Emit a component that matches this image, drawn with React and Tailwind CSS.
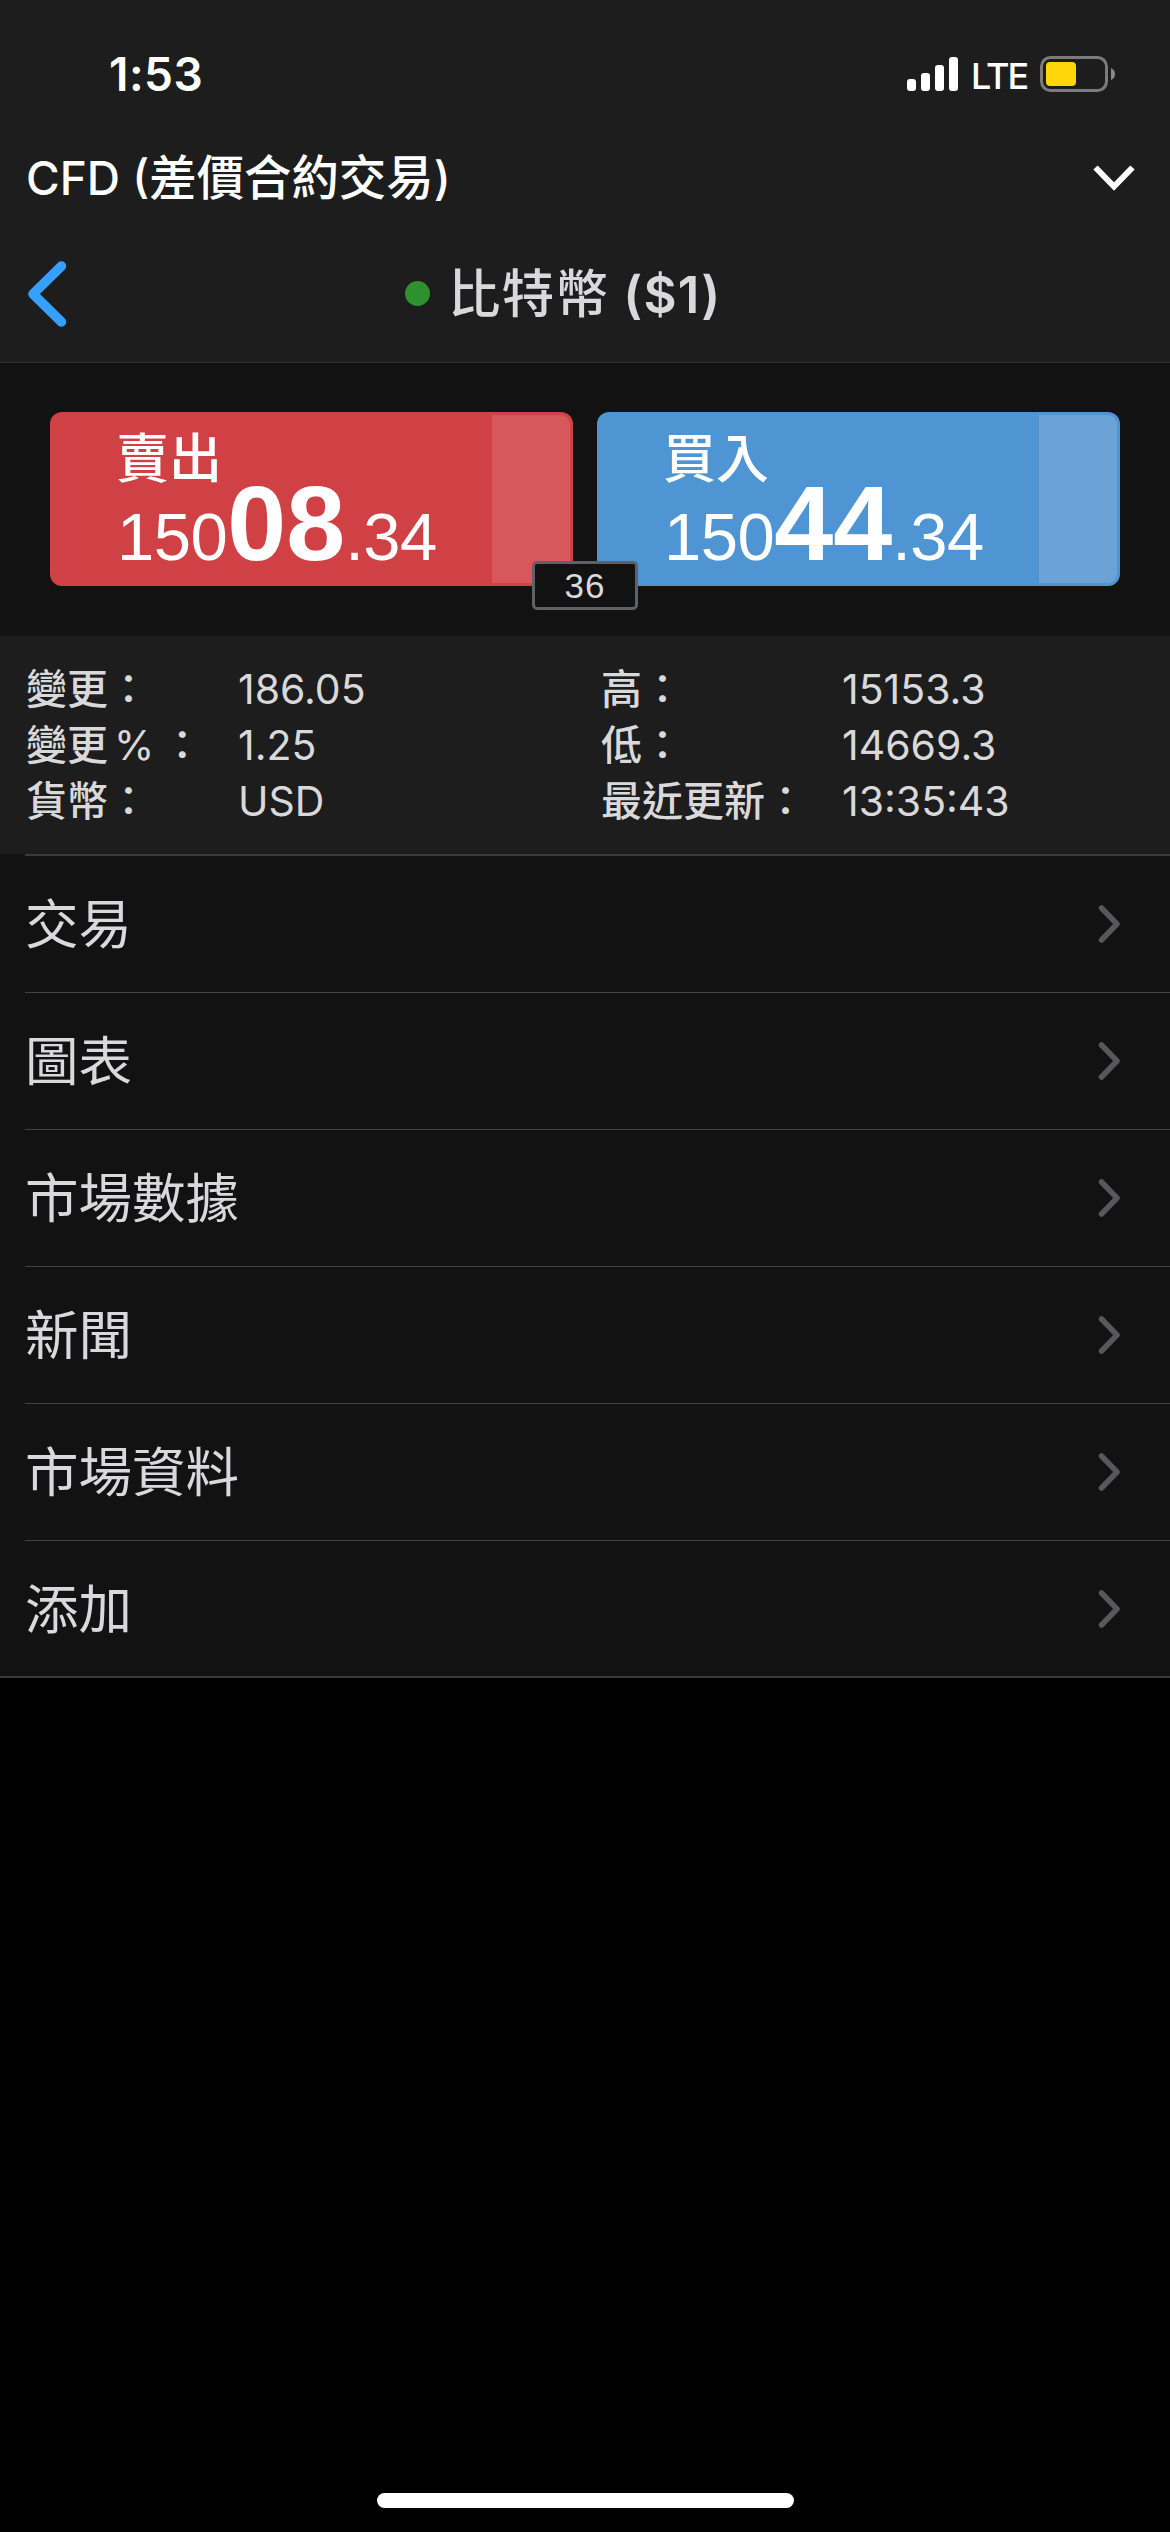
import React from "react";

const menu = ["交易", "圖表", "市場數據", "新聞", "市場資料", "添加"];

function StatusBar() {
  return (
    <div className="flex h-[148px] items-center justify-between pr-[55px] pl-[109px]">
      <span className="text-[46px] leading-none font-semibold tracking-[0.5px] text-white">1:53</span>
      <div className="flex items-center">
        <div className="flex h-[34px] items-end gap-[5px]">
          <i className="h-[12px] w-[9px] rounded-[3px] bg-white" />
          <i className="h-[18px] w-[9px] rounded-[3px] bg-white" />
          <i className="h-[26px] w-[9px] rounded-[3px] bg-white" />
          <i className="h-[34px] w-[9px] rounded-[3px] bg-white" />
        </div>
        <span className="ml-[13px] w-[69px] pt-[3px] text-[36px] leading-none font-medium tracking-[-2px] text-white">LTE</span>
        <svg width="75" height="36" viewBox="0 0 75 36" fill="none">
          <rect x="1.5" y="1.5" width="65" height="33" rx="9" stroke="#7b7b7b" strokeWidth="3" />
          <rect x="6" y="6" width="30" height="24" rx="4" fill="#ffd60a" />
          <path d="M71 12 Q75 14 75 18 Q75 22 71 24 Z" fill="#8a8a8a" />
        </svg>
      </div>
    </div>
  );
}

function PriceButton({ label, big, className, stripClass }) {
  return (
    <button className={"relative flex h-[174px] w-[523px] flex-col items-start rounded-[12px] pt-[21px] text-left text-white " + className}>
      <span className="ml-[66px] h-[52px] text-[53px] leading-[52px] font-medium">{label}</span>
      <span className="-mt-[15px] ml-[67px] flex items-baseline font-['Liberation_Sans',sans-serif] text-[67px] leading-none">
        <span className="tracking-[-0.5px]">150</span>
        <span className="text-[106px] font-bold">{big}</span>
        <span className="tracking-[-0.5px]">.34</span>
      </span>
      <span className={"absolute top-[3px] right-[3px] h-[168px] w-[78px] rounded-r-[9px] " + stripClass} />
    </button>
  );
}

function Info({ rows, className, labelClass }) {
  return (
    <dl className={className}>
      {rows.map(([label, value]) => (
        <div key={value} className="flex h-[56px] items-center">
          <dt className={"shrink-0 font-medium whitespace-pre " + labelClass}>
            {label}：
          </dt>
          <dd>{value}</dd>
        </div>
      ))}
    </dl>
  );
}

export default function App() {
  return (
    <div className="flex h-[2532px] w-[1170px] flex-col overflow-hidden bg-black font-['Inter','Noto_Sans_CJK_TC',sans-serif] text-[#d9d9db]">
      <header className="h-[363px] border-b border-[#333333] bg-[#1d1d1d]">
        <StatusBar />
        <div className="flex h-[60px] items-center justify-between pr-[35px] pl-[26px] text-white">
          <span className="text-[46px] leading-none font-medium whitespace-pre">
            CFD (<span className="text-[47.4px]">差價合約交易</span>)
          </span>
          <svg width="42" height="26" viewBox="0 0 42 26" fill="none" stroke="#fff" strokeWidth="6">
            <path d="M2.5 2.5 L21 21.5 L39.5 2.5" />
          </svg>
        </div>
        <div className="grid grid-cols-[377px_1fr] items-center pt-[17px] pl-[28px]">
          <svg width="39" height="66" viewBox="0 0 39 66" fill="none" stroke="#36a0fe" strokeWidth="9.5" strokeLinecap="round" strokeLinejoin="round">
            <path d="M33.5 5 L5 33 L33.5 61" />
          </svg>
          <div className="flex h-[137px] items-center">
            <i className="size-[25px] rounded-full bg-[#2f9030]" />
            <h1 className="ml-[18px] pt-[2px] text-[51px] leading-none font-semibold tracking-[1.2px] whitespace-pre">
              <span className="text-[52.5px] font-medium">比特幣</span> ($1)
            </h1>
          </div>
        </div>
      </header>

      <section className="relative flex h-[273px] gap-[24px] bg-[#121212] px-[50px] pt-[49px]">
        <PriceButton label="賣出" big="08" className="bg-[#d04146]" stripClass="bg-[#d8575b]" />
        <PriceButton label="買入" big="44" className="bg-[#4f94d3]" stripClass="bg-[#6ca3d6]" />
        <span className="absolute top-[198px] left-[532px] flex h-[49px] w-[106px] items-center justify-center rounded-[5px] border-3 border-[#606167] bg-[#121212] font-['Liberation_Sans',sans-serif] text-[35px] leading-none tracking-[1px]">
          36
        </span>
      </section>

      <section className="flex h-[218px] bg-[#1d1d1d] pt-[25px] text-[41px] leading-none">
        <Info
          className="w-[575px] pl-[26px]"
          labelClass="w-[212px]"
          rows={[
            ["變更", "186.05"],
            [<>變更<span className="mr-[-4px] ml-[6px] font-normal">% </span></>, "1.25"],
            ["貨幣", "USD"],
          ]}
        />
        <Info
          className="pl-[26px]"
          labelClass="w-[241px]"
          rows={[
            ["高", "15153.3"],
            ["低", "14669.3"],
            ["最近更新", "13:35:43"],
          ]}
        />
      </section>

      <ul className="border-b-2 border-[#38383a] bg-[#121212] text-[53.5px] leading-none">
        {menu.map((m) => (
          <li key={m} className="ml-[25px] flex h-[137px] items-center justify-between border-t border-[#434346] pr-[49px] first:h-[138px] first:border-t-2 first:border-[#3a3a3f] last:h-[136px]">
            <span className="pt-[2px]">{m}</span>
            <svg width="23" height="40" viewBox="0 0 23 40" fill="none" stroke="#58585a" strokeWidth="5.5" strokeLinecap="round" strokeLinejoin="round">
              <path d="M3.5 4 L19 20 L3.5 36" />
            </svg>
          </li>
        ))}
      </ul>

      <div className="mx-auto mt-auto mb-[24px] h-[15px] w-[417px] rounded-full bg-white" />
    </div>
  );
}
